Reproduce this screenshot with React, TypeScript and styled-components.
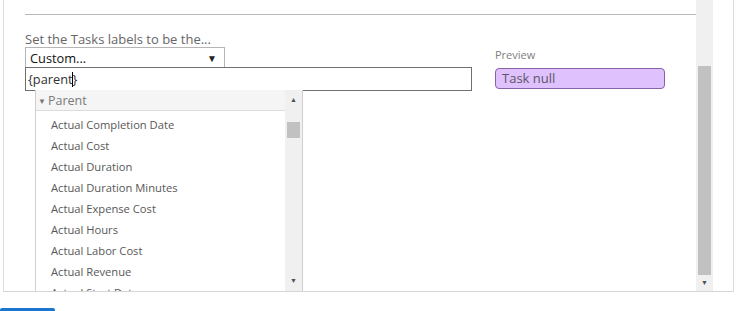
import styled, { createGlobalStyle } from 'styled-components';

const GlobalStyle = createGlobalStyle`
  html, body {
    margin: 0;
    padding: 0;
    background: #ffffff;
  }
  body {
    font-family: "Open Sans", "Liberation Sans", Arial, sans-serif;
    overflow: hidden;
  }
`

const Page = styled.div`
  width: 737px;
  height: 311px;
  position: relative;
  overflow: hidden;
`

const Frame = styled.div`
  margin-left: 3px;
  width: 729px;
  height: 291px;
  border-left: 1px solid #dcdcdc;
  border-right: 1px solid #dcdcdc;
  border-bottom: 1px solid #d6d6d6;
  display: flex;
`

const Content = styled.div`
  position: relative;
  flex: 0 0 671px;
  padding-left: 21px;
  overflow: hidden;
`

const Rule = styled.div`
  margin-top: 14px;
  border-top: 1px solid #b9b9b9;
`

const Row = styled.div`
  display: flex;
  margin-top: 17px;
`

const LeftCol = styled.div`
  width: 447px;
`

const RightCol = styled.div`
  margin-left: 23px;
  padding-top: 16px;
`

const Label = styled.div`
  font-size: 13px;
  line-height: 15px;
  color: #666;
`

const Select = styled.div`
  box-sizing: border-box;
  width: 200px;
  height: 20px;
  border: 1px solid #b5b5b5;
  border-bottom: none;
  display: flex;
  align-items: center;
  justify-content: space-between;
  padding: 0 7px 0 4px;
  font-size: 12.8px;
  color: #111;
`

const Arrow = styled.span`
  font-size: 10px;
  color: #222;
`

const Input = styled.div`
  box-sizing: border-box;
  width: 447px;
  height: 24px;
  border: 1px solid #707070;
  padding-left: 2px;
  display: flex;
  align-items: center;
  font-size: 12.8px;
  color: #333;
`

const Caret = styled.span`
  display: inline-block;
  width: 1px;
  height: 15px;
  background: #000;
  margin: 0 0 0 -1px;
`

const PreviewLabel = styled.div`
  font-size: 11px;
  color: #808080;
  line-height: 14px;
`

const PreviewBox = styled.div`
  box-sizing: border-box;
  margin-top: 6px;
  width: 170px;
  height: 21px;
  border: 1px solid #8563a6;
  border-radius: 4px;
  background: #dfc1fd;
  padding-left: 6px;
  font-size: 13px;
  line-height: 19px;
  color: #5d5566;
`

const Dropdown = styled.div`
  position: absolute;
  left: 31px;
  top: 90px;
  width: 266px;
  height: 210px;
  background: #fff;
  border-left: 1px solid #cfcfcf;
  border-right: 1px solid #cfcfcf;
  display: flex;
`

const ListCol = styled.div`
  flex: 1;
  overflow: hidden;
`

const Header = styled.div`
  height: 20px;
  background: #f5f5f5;
  border-bottom: 1px solid #dcdcdc;
  display: flex;
  align-items: center;
  padding-left: 2px;
  font-size: 12.5px;
  color: #7a7a7a;
`

const HeadTri = styled.span`
  font-size: 8px;
  margin-right: 2px;
  color: #777;
`

const Items = styled.div`
  padding-top: 3px;
`

const Item = styled.div`
  height: 21px;
  line-height: 21px;
  padding-left: 15px;
  font-size: 11.2px;
  color: #585858;
  white-space: nowrap;
`

const ScrollBar = styled.div<{ $w: number }>`
  flex: 0 0 ${(p) => p.$w}px;
  background: #f0f0f0;
  position: relative;
`

const Thumb = styled.div<{ $top: number; $h: number }>`
  position: absolute;
  left: 2px;
  right: 2px;
  top: ${(p) => p.$top}px;
  height: ${(p) => p.$h}px;
  background: #c1c1c1;
`

const ArrowBtn = styled.div<{ $top: number }>`
  position: absolute;
  left: 0;
  right: 0;
  top: ${(p) => p.$top}px;
  text-align: center;
  font-size: 7px;
  line-height: 8px;
  color: #505050;
`

const Gutter = styled.div`
  flex: 0 0 20px;
`

const BlueButton = styled.div`
  position: absolute;
  left: 0;
  top: 308px;
  width: 55px;
  height: 20px;
  background: #1a76cf;
  border-radius: 2px;
`

const fields = [
  'Actual Completion Date',
  'Actual Cost',
  'Actual Duration',
  'Actual Duration Minutes',
  'Actual Expense Cost',
  'Actual Hours',
  'Actual Labor Cost',
  'Actual Revenue',
  'Actual Start Date',
]

export default function App() {
  return (
    <Page>
      <GlobalStyle />
      <Frame>
        <Content>
          <Rule />
          <Row>
            <LeftCol>
              <Label>Set the Tasks labels to be the...</Label>
              <Select>
                <span>Custom...</span>
                <Arrow>▼</Arrow>
              </Select>
              <Input>
                {'{parent'}
                <Caret />
                {'}'}
              </Input>
            </LeftCol>
            <RightCol>
              <PreviewLabel>Preview</PreviewLabel>
              <PreviewBox>Task null</PreviewBox>
            </RightCol>
          </Row>
          <Dropdown>
            <ListCol>
              <Header>
                <HeadTri>▼</HeadTri>Parent
              </Header>
              <Items>
                {fields.map((f) => (
                  <Item key={f}>{f}</Item>
                ))}
              </Items>
            </ListCol>
            <ScrollBar $w={17}>
              <ArrowBtn $top={6}>▲</ArrowBtn>
              <Thumb $top={32} $h={16} />
              <ArrowBtn $top={187}>▼</ArrowBtn>
            </ScrollBar>
          </Dropdown>
        </Content>
        <ScrollBar $w={17}>
          <Thumb $top={66} $h={209} />
          <ArrowBtn $top={279}>▼</ArrowBtn>
        </ScrollBar>
        <Gutter />
      </Frame>
      <BlueButton />
    </Page>
  )
}
